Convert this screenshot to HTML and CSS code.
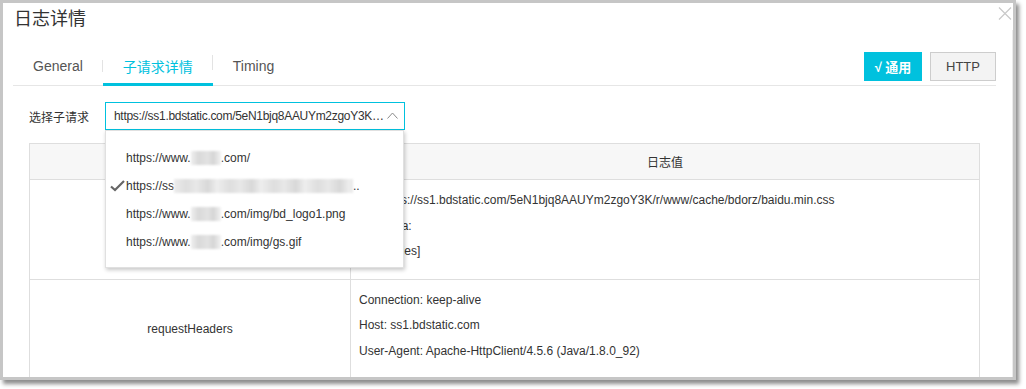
FILE: index.html
```html
<!DOCTYPE html>
<html lang="zh">
<head>
<meta charset="utf-8">
<title>日志详情</title>
<link rel="stylesheet" href="styles.css">
</head>
<body>
<div class="dialog">
  <div class="dialog-head">
    <h1 class="title">日志详情</h1>
    <button class="close" aria-label="close">
      <svg width="14" height="13" viewBox="0 0 14 13"><path d="M1 0.5L13 12.5M13 0.5L1 12.5" stroke="#c9c9c9" stroke-width="1.2" fill="none"/></svg>
    </button>
  </div>
  <div class="dialog-body">
    <div class="tabbar">
      <div class="tabs">
        <div class="tab">General</div>
        <div class="tab active sep">子请求详情</div>
        <div class="tab sep sep-high">Timing</div>
      </div>
      <div class="modes">
        <button class="mode on">√ 通用</button>
        <button class="mode">HTTP</button>
      </div>
    </div>

    <div class="picker">
      <label class="picker-label">选择子请求</label>
      <div class="select">
        <span class="select-text">https://ss1.bdstatic.com/5eN1bjq8AAUYm2zgoY3K/r/www/cache/bdorz/baidu.min.css</span>
        <svg class="chev" width="11" height="7" viewBox="0 0 11 7"><path d="M0.5 6.5L5.5 1L10.5 6.5" stroke="#8a8a8a" stroke-width="1" fill="none"/></svg>
        <div class="menu">
          <div class="item">https://www.<span class="blur b1"></span>.com/</div>
          <div class="item checked"><svg class="check" width="15" height="12" viewBox="0 0 15 12"><path d="M1 6.5L5 10L14 1" stroke="#666" stroke-width="2.2" fill="none"/></svg>https://ss<span class="blur b2"></span>..</div>
          <div class="item">https://www.<span class="blur b1"></span>.com/img/bd_logo1.png</div>
          <div class="item">https://www.<span class="blur b1"></span>.com/img/gs.gif</div>
        </div>
      </div>
    </div>

    <table class="log">
      <thead>
        <tr><th class="key"></th><th class="val-h">日志值</th></tr>
      </thead>
      <tbody>
        <tr>
          <td class="key">requestLine</td>
          <td class="val">
            <div class="line">Url: https://ss1.bdstatic.com/5eN1bjq8AAUYm2zgoY3K/r/www/cache/bdorz/baidu.min.css</div>
            <div class="line">PostData:</div>
            <div class="line">[Properties]</div>
          </td>
        </tr>
        <tr>
          <td class="key">requestHeaders</td>
          <td class="val">
            <div class="line">Connection: keep-alive</div>
            <div class="line">Host: ss1.bdstatic.com</div>
            <div class="line">User-Agent: Apache-HttpClient/4.5.6 (Java/1.8.0_92)</div>
          </td>
        </tr>
      </tbody>
    </table>
  </div>
</div>
</body>
</html>
```
FILE: styles.css
```css
* { box-sizing: border-box; }
html, body { margin: 0; padding: 0; background: #fff; }
body {
  font-family: "Liberation Sans", Arial, "Noto Sans CJK SC", sans-serif;
  font-size: 12px;
  color: #333;
  width: 1026px;
  height: 389px;
  overflow: hidden;
}
.dialog {
  width: 1016px;
  height: 380px;
  border: 3px solid #c6c6c6;
  background: #fff;
  box-shadow: 3px 4px 4px rgba(0,0,0,0.45);
  display: flex;
  flex-direction: column;
  overflow: hidden;
}
.dialog-head {
  height: 27px;
  display: flex;
  justify-content: space-between;
  align-items: flex-start;
  padding: 0 1px 0 11px;
  flex: none;
}
.title {
  margin: 2px 0 0;
  font-size: 18px;
  font-weight: normal;
  line-height: 24px;
  color: #333;
  font-family: "Noto Sans CJK SC", "Liberation Sans", sans-serif;
}
.close {
  border: 0;
  background: none;
  padding: 0;
  margin-top: 4px;
  width: 14px;
  height: 13px;
  display: block;
}
.close svg { display: block; }
.dialog-body {
  flex: 1;
  border-right: 1px solid #ebebeb;
  overflow: hidden;
}
.tabbar {
  margin: 17px 16px 0 10px;
  display: flex;
  justify-content: space-between;
  border-bottom: 1px solid #e6e6e6;
}
.tabs { display: flex; }
.tab {
  position: relative;
  font-size: 14px;
  line-height: 20px;
  padding: 9px 20px 7px;
  border-bottom: 3px solid transparent;
  margin-bottom: -1px;
  color: #555;
}
.tab.sep::before {
  content: "";
  position: absolute;
  left: -1px;
  top: 13px;
  height: 12px;
  border-left: 1px solid #e3e3e3;
}
.tab.sep-high::before { top: 8px; height: 15px; }
.tab.active {
  color: #00c1de;
  border-bottom-color: #00c1de;
  font-family: "Noto Sans CJK SC", sans-serif;
}
.modes {
  display: flex;
  gap: 8px;
  align-self: flex-end;
  margin-bottom: 4px;
}
.mode {
  height: 29px;
  padding: 0;
  font-family: "Liberation Sans", "Noto Sans CJK SC", sans-serif;
  font-size: 13px;
  border: 1px solid #cdcdcd;
  background: #f3f3f3;
  color: #444;
  width: 66px;
}
.mode.on {
  width: 58px;
  background: #00c1de;
  border-color: #00c1de;
  color: #fff;
  font-weight: bold;
}
.picker {
  display: flex;
  align-items: center;
  margin-top: 16px;
  padding-left: 26px;
}
.picker-label {
  width: 76px;
  color: #333;
}
.select {
  position: relative;
  width: 300px;
  height: 28px;
  border: 1px solid #00c1de;
  display: flex;
  align-items: center;
  padding: 0 6px 0 8px;
}
.select-text {
  flex: 1;
  min-width: 0;
  white-space: nowrap;
  overflow: hidden;
  text-overflow: ellipsis;
  letter-spacing: -0.3px;
  color: #333;
}
.chev { flex: none; margin-top: -2px; }
.menu {
  position: absolute;
  left: -1px;
  top: 27px;
  width: 299px;
  background: #fff;
  border: 1px solid #e0e0e0;
  box-shadow: 1px 2px 4px rgba(0,0,0,0.22);
  padding: 13px 0 11px;
  z-index: 2;
}
.item {
  height: 28px;
  line-height: 28px;
  padding-left: 20px;
  color: #333;
  white-space: nowrap;
  display: flex;
  align-items: center;
}
.check { margin-left: -16px; margin-right: 1px; }
.blur {
  display: inline-block;
  height: 14px;
  filter: blur(1.2px);
}
.b1 {
  width: 30px;
  background: linear-gradient(90deg, #efefef 0, #d9d9d9 25%, #e2e2e2 55%, #d6d6d6 75%, #f2f2f2 100%);
}
.b2 {
  width: 179px;
  background: repeating-linear-gradient(90deg, #ececec 0, #dedede 12px, #e8e8e8 22px, #d8d8d8 34px, #f0f0f0 44px);
}
.log {
  margin: 13px 0 0 26px;
  width: 951px;
  border-collapse: collapse;
  table-layout: fixed;
}
.log th, .log td {
  border: 1px solid #dedede;
  padding: 0;
  font-weight: normal;
}
.log thead th {
  background: #f7f7f7;
  height: 36px;
  text-align: center;
}
.log th.key, .log td.key { width: 321px; text-align: center; }
.val { padding: 8px 8px 14px !important; vertical-align: top; }
.line { line-height: 25.5px; white-space: nowrap; }
```
